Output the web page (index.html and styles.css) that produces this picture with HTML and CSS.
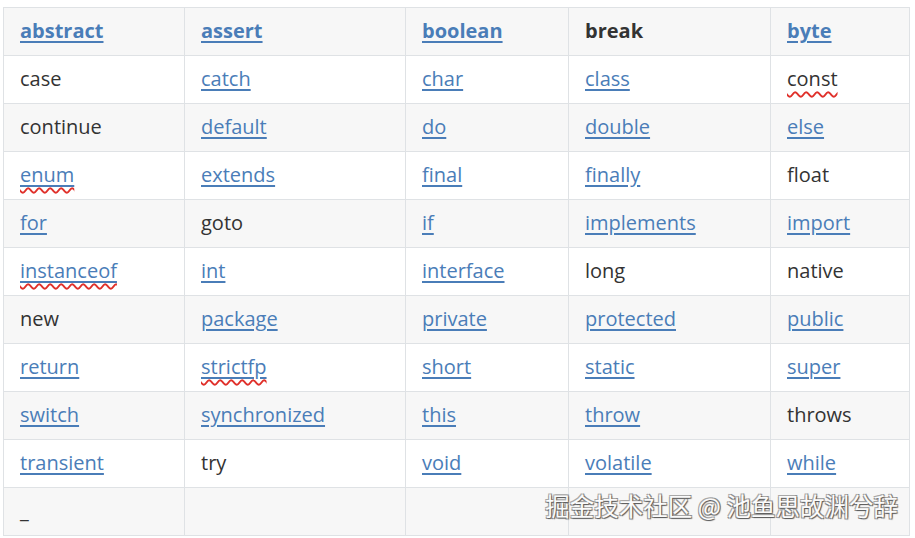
FILE: index.html
```html
<!DOCTYPE html>
<html lang="en">
<head>
<meta charset="utf-8">
<title>Java keywords</title>
<link rel="stylesheet" href="styles.css">
</head>
<body>
<div class="page">
<table class="kw">
  <colgroup>
    <col class="c1"><col class="c2"><col class="c3"><col class="c4"><col class="c5">
  </colgroup>
  <thead>
    <tr>
      <th><a href="#">abstract</a></th>
      <th><a href="#">assert</a></th>
      <th><a href="#">boolean</a></th>
      <th>break</th>
      <th><a href="#">byte</a></th>
    </tr>
  </thead>
  <tbody>
    <tr><td>case</td><td><a href="#">catch</a></td><td><a href="#">char</a></td><td><a href="#">class</a></td><td><span class="sp">const</span></td></tr>
    <tr><td>continue</td><td><a href="#">default</a></td><td><a href="#">do</a></td><td><a href="#">double</a></td><td><a href="#">else</a></td></tr>
    <tr><td><a href="#"><span class="sp">enum</span></a></td><td><a href="#">extends</a></td><td><a href="#">final</a></td><td><a href="#">finally</a></td><td>float</td></tr>
    <tr><td><a href="#">for</a></td><td>goto</td><td><a href="#">if</a></td><td><a href="#">implements</a></td><td><a href="#">import</a></td></tr>
    <tr><td><a href="#"><span class="sp">instanceof</span></a></td><td><a href="#">int</a></td><td><a href="#">interface</a></td><td>long</td><td>native</td></tr>
    <tr><td>new</td><td><a href="#">package</a></td><td><a href="#">private</a></td><td><a href="#">protected</a></td><td><a href="#">public</a></td></tr>
    <tr><td><a href="#">return</a></td><td><a href="#"><span class="sp">strictfp</span></a></td><td><a href="#">short</a></td><td><a href="#">static</a></td><td><a href="#">super</a></td></tr>
    <tr><td><a href="#">switch</a></td><td><a href="#">synchronized</a></td><td><a href="#">this</a></td><td><a href="#">throw</a></td><td>throws</td></tr>
    <tr><td><a href="#">transient</a></td><td>try</td><td><a href="#">void</a></td><td><a href="#">volatile</a></td><td><a href="#">while</a></td></tr>
    <tr><td>_</td><td></td><td></td><td></td><td></td></tr>
  </tbody>
</table>
<div class="wm">掘金技术社区 @ 池鱼思故渊兮辞</div>
</div>
</body>
</html>
```
FILE: styles.css
```css
html, body {
  margin: 0;
  padding: 0;
  background: #ffffff;
}
.page {
  position: relative;
  width: 915px;
  height: 538px;
  padding: 7px 0 0 3px;
  box-sizing: border-box;
  font-family: "Open Sans", "Noto Sans", sans-serif;
  font-size: 20px;
  color: #333333;
}
.kw {
  border-collapse: collapse;
  table-layout: fixed;
  width: 906px;
}
.c1 { width: 181px; }
.c2 { width: 221px; }
.c3 { width: 163px; }
.c4 { width: 202px; }
.c5 { width: 139px; }
.kw th, .kw td {
  border: 1px solid #dfe2e5;
  height: 48px;
  padding: 0 0 2px 16px;
  text-align: left;
  vertical-align: middle;
  white-space: nowrap;
  box-sizing: border-box;
}
.kw th {
  font-weight: 700;
  background: #f7f7f7;
}
.kw tbody tr:nth-child(even) td {
  background: #f7f7f7;
}
.kw a {
  color: #4a7db8;
  text-decoration: underline;
  text-underline-offset: 3px;
  text-decoration-thickness: 1.5px;
}
.sp {
  text-decoration: underline wavy #e0302a;
  text-decoration-thickness: 1.5px;
  text-underline-offset: 5px;
}
.wm {
  position: absolute;
  right: 17px;
  top: 489px;
  font-family: "Noto Sans CJK SC", "Noto Sans", sans-serif;
  font-size: 24.5px;
  line-height: 34px;
  color: #fbfbfb;
  text-shadow: 1px 1px 1px #5a5a5a, -1px -1px 0 #a8a8a8, 1px -1px 0 #909090, -1px 1px 0 #909090;
  white-space: nowrap;
}
```
